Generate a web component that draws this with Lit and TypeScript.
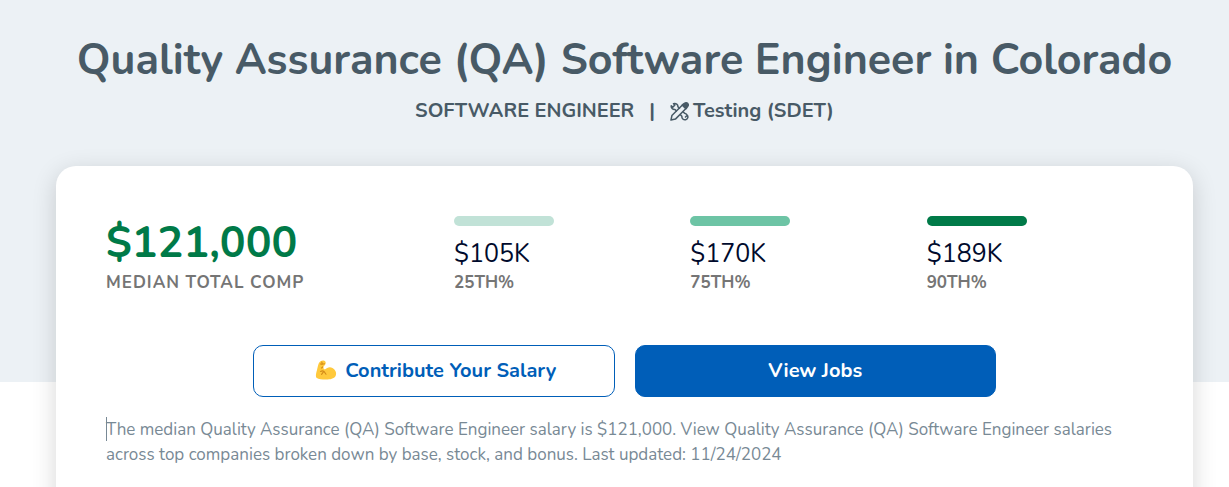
import { LitElement, html, css } from "lit";
import { customElement } from "lit/decorators.js";

interface Percentile {
  amount: string;
  label: string;
  tone: string;
}

const PERCENTILES: Percentile[] = [
  { amount: "$105K", label: "25TH%", tone: "light" },
  { amount: "$170K", label: "75TH%", tone: "medium" },
  { amount: "$189K", label: "90TH%", tone: "dark" },
];

@customElement("app-root")
export class AppRoot extends LitElement {
  static styles = css`
    :host {
      display: block;
      min-height: 100vh;
      overflow: hidden;
      background: #fff;
      font-family: Nunito, Lato, "Noto Sans", sans-serif;
      color: #485a66;
    }
    * {
      box-sizing: border-box;
    }
    .hero {
      background: #ecf1f5;
      padding: 30px 36px 256px 56px;
      text-align: center;
    }
    h1 {
      margin: 0;
      font-size: 43px;
      line-height: 60px;
      font-weight: 700;
    }
    .tags {
      display: flex;
      justify-content: center;
      align-items: center;
      gap: 15px;
      margin-top: 6px;
      font-size: 20px;
      line-height: 30px;
      font-weight: 700;
    }
    .tag {
      display: flex;
      align-items: center;
      gap: 4px;
      color: inherit;
      text-decoration: none;
    }
    .tools {
      width: 19px;
      height: 19px;
    }
    .card {
      margin: -216px 36px 0 56px;
      padding: 50px 50px 60px;
      border-radius: 20px;
      background: #fff;
      box-shadow: 0 6px 24px rgba(0, 0, 0, 0.16);
    }
    .stats {
      display: grid;
      grid-template-columns: 348px repeat(3, 1fr);
      margin-right: -20px;
    }
    .median {
      font-size: 43px;
      line-height: 54px;
      font-weight: 700;
      color: #007a48;
    }
    .label {
      font-size: 17px;
      line-height: 26px;
      font-weight: 700;
      color: #757575;
    }
    .wide {
      letter-spacing: 1px;
    }
    .bar {
      width: 100px;
      height: 10px;
      border-radius: 5px;
    }
    .light {
      background: #c1e2d7;
    }
    .medium {
      background: #6dc4a5;
    }
    .dark {
      background: #007a48;
    }
    .amount {
      margin-top: 12px;
      font-size: 25px;
      line-height: 32px;
      color: #000a2c;
    }
    .actions {
      display: grid;
      grid-template-columns: 1fr 1fr;
      gap: 20px;
      max-width: 743px;
      margin: 49px auto 0;
    }
    button {
      display: flex;
      align-items: center;
      justify-content: center;
      gap: 8px;
      height: 52px;
      padding: 0 8px 2px;
      border: 1px solid #005eb8;
      border-radius: 10px;
      background: #fff;
      color: #005eb8;
      font: inherit;
      font-size: 20px;
      font-weight: 700;
    }
    .primary {
      background: #005eb8;
      color: #fff;
    }
    .muscle {
      width: 22px;
      height: 22px;
      margin-left: 4px;
    }
    .summary {
      margin: 20px 0 0;
      font-size: 17px;
      line-height: 25px;
      color: #788995;
    }
    .caret {
      display: inline-block;
      width: 1px;
      height: 24px;
      margin-right: -1px;
      vertical-align: -6px;
      background: #788995;
    }
  `;

  private toolsIcon() {
    return html`<svg class="tools" viewBox="0 0 20 20" fill="none" stroke="currentColor" stroke-width="1.6" stroke-linecap="round" stroke-linejoin="round" aria-hidden="true">
      <path d="M1 19 2 14.3 13.6 2.7 17.3 6.4 5.7 18Z" />
      <path d="M13 3.3 14.8 1.7Q17 .2 18.6 1.5Q20 3.2 18.4 5.1L16.7 7Z" fill="currentColor" />
      <path d="M6.6 9.3 5.2 7.8C2.8 8 1 6.2 1.3 4L2.9 5.4 5 3.4 3.7 1.7C6.2 1 8.6 2.7 8.3 5L9.9 6.6M11.2 13.6 12.5 15C12.2 17.4 14.2 19.2 16.5 18.7C18.8 18.1 19.4 15.6 18.2 14L16.3 15.8M14 10.6 15.4 11.9Q17 12 18.2 14" />
    </svg>`;
  }

  private muscleIcon() {
    return html`<svg class="muscle" viewBox="0 0 22 22" aria-hidden="true">
      <path d="M5.5 2.2C7 1.2 9.4 1.3 10.3 2.5C11.2 3.7 10.6 5.4 9.6 6.4L8.6 7 8.3 9.2 9.8 10.6C12 8.7 14.5 7.4 17.5 9C20.4 10.5 22 14 20.6 17C19 20 14.5 20.6 10.5 20.5C7 20.5 3.5 20.3 1.8 19C.3 17.7 1 14.5 2 11C2.9 7.8 3.2 3.7 5.5 2.2Z" fill="#ffc93c" />
      <path d="M5.6 4.9Q7.2 5.6 9.4 4.8M6.8 3 7.2 4.8M7.8 7.8 6.6 9M5.6 12.4Q7.5 11.4 9 12.4L11 15.2M8.6 12.7 6.6 15.4" fill="none" stroke="#d38a18" stroke-width="1.1" stroke-linecap="round" />
    </svg>`;
  }

  render() {
    return html`
      <header class="hero">
        <h1>Quality Assurance (QA) Software Engineer in Colorado</h1>
        <div class="tags">
          <a class="tag" href="#software-engineer">SOFTWARE ENGINEER</a>
          <span>|</span>
          <a class="tag" href="#testing">${this.toolsIcon()}<span>Testing (SDET)</span></a>
        </div>
      </header>
      <main class="card">
        <section class="stats">
          <div>
            <div class="median">$121,000</div>
            <div class="label wide">MEDIAN TOTAL COMP</div>
          </div>
          ${PERCENTILES.map(
            (p) => html`<div>
              <div class="bar ${p.tone}"></div>
              <div class="amount">${p.amount}</div>
              <div class="label">${p.label}</div>
            </div>`
          )}
        </section>
        <div class="actions">
          <button type="button">${this.muscleIcon()}<span>Contribute Your Salary</span></button>
          <button type="button" class="primary">View Jobs</button>
        </div>
        <p class="summary"><span class="caret"></span>The median Quality Assurance (QA) Software Engineer salary is $121,000. View Quality Assurance (QA) Software Engineer salaries across top companies broken down by base, stock, and bonus. Last updated: 11/24/2024</p>
      </main>
    `;
  }
}
